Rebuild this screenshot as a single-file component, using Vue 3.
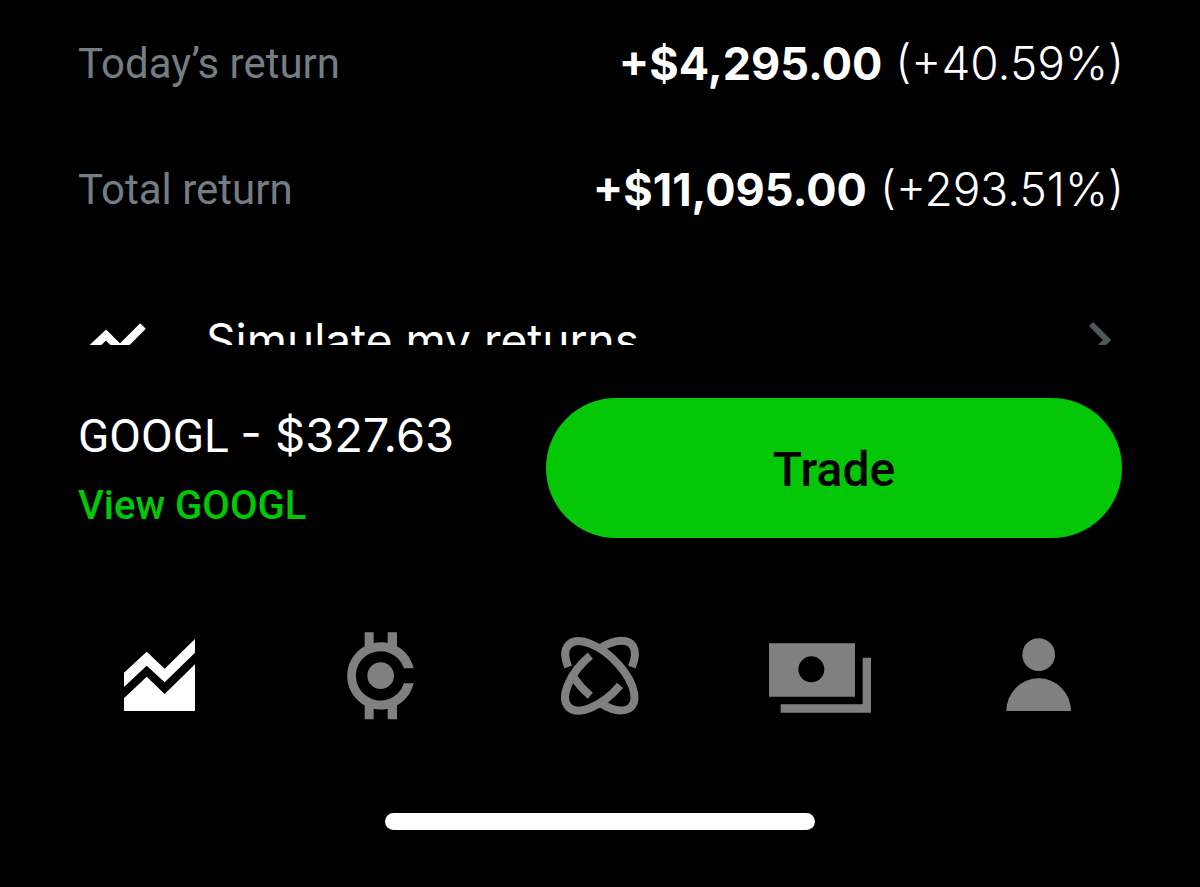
<script setup>
const returns = [
  { label: 'Today’s return', amount: '+$4,295.00', percent: '(+40.59%)' },
  { label: 'Total return', amount: '+$11,095.00', percent: '(+293.51%)' },
]
</script>

<template>
  <div class="screen">
    <main class="details">
      <dl class="returns">
        <div v-for="row in returns" :key="row.label" class="row">
          <dt>{{ row.label }}</dt>
          <dd><strong>{{ row.amount }}</strong> {{ row.percent }}</dd>
        </div>
      </dl>
      <a class="simulate" href="#simulate">
        <svg class="trend" viewBox="0 0 72 48" aria-hidden="true">
          <path d="M7 39 28 19 42 33 65 10" />
        </svg>
        <span class="simulate-label">Simulate my returns</span>
        <svg class="chevron" viewBox="0 0 24 48" aria-hidden="true">
          <path d="M4 8 20 24 4 40" />
        </svg>
      </a>
    </main>

    <footer class="dock">
      <section class="trade-bar">
        <div class="quote">
          <p class="price">GOOGL <span class="figure">- $327.63</span></p>
          <a class="view" href="#googl">View GOOGL</a>
        </div>
        <button class="trade" type="button">Trade</button>
      </section>

      <nav class="tabs" aria-label="Main">
        <a href="#investing" class="tab active" aria-label="Investing" aria-current="page">
          <svg viewBox="0 0 330 330">
            <path d="M57 158 125 95 179 146 270 57V98L179 187 125 137 57 201Z" />
            <path d="M57 235 125 170 179 222 270 133V273H57Z" />
          </svg>
        </a>
        <a href="#crypto" class="tab" aria-label="Crypto">
          <svg viewBox="0 0 330 330">
            <path d="M266 145A101 101 0 1 0 266 190H237A74 74 0 1 1 237 145Z" />
            <path d="M119 37H146V84H119ZM188 37H216V84H188ZM119 251H146V298H119ZM188 251H216V298H188Z" />
            <circle cx="167" cy="167" r="40" />
          </svg>
        </a>
        <a href="#discover" class="tab" aria-label="Discover">
          <svg viewBox="0 0 330 330">
            <g class="orbit" transform="translate(165 167) rotate(45)">
              <path d="M-86 49A132 64 0 1 1 58 58" />
              <path d="M-58 58A132 64 0 0 0 22 63" />
            </g>
            <g class="orbit" transform="translate(165 167) rotate(-45)">
              <path d="M22 -63A132 64 0 1 0 22 63" />
              <path d="M58 -58A132 64 0 0 1 86 49" />
            </g>
          </svg>
        </a>
        <a href="#cash" class="tab" aria-label="Cash">
          <svg viewBox="0 0 330 330">
            <path fill-rule="evenodd" d="M12 70H270V230H12ZM100 148A39 39 0 1 0 178 148A39 39 0 1 0 100 148Z" />
            <path d="M293 113H318V278H47V253H293Z" />
          </svg>
        </a>
        <a href="#account" class="tab" aria-label="Account">
          <svg viewBox="0 0 330 330">
            <circle cx="161" cy="104" r="49" />
            <path d="M64 273A97 98 0 0 1 258 273Z" />
          </svg>
        </a>
      </nav>

      <div class="home-indicator"></div>
    </footer>
  </div>
</template>

<style>
body {
  margin: 0;
  background: #000;
}
</style>

<style scoped>
.screen {
  display: flex;
  flex-direction: column;
  height: 100vh;
  background: #000;
  color: #fff;
  font-family: Roboto, "Liberation Sans", sans-serif;
}
.details {
  flex: 1;
  min-height: 0;
  overflow: hidden;
  padding: 0 76px 0 78px;
}
.returns {
  margin: 0;
}
.row {
  display: flex;
  align-items: center;
  justify-content: space-between;
  height: 126px;
}
dt {
  color: #737d84;
  font-size: 42px;
}
dd {
  margin: 0;
  font-family: Inter, "Liberation Sans", sans-serif;
  font-size: 46px;
  font-weight: 300;
}
strong {
  font-size: 45px;
  font-weight: 700;
}
.simulate {
  display: flex;
  align-items: center;
  margin-top: 64px;
  color: #fff;
  text-decoration: none;
}
.simulate svg {
  fill: none;
  flex: none;
  height: 48px;
}
.trend {
  width: 72px;
  margin-right: 56px;
  stroke: #fff;
  stroke-width: 8;
}
.simulate-label {
  flex: 1;
  font-family: Inter, "Liberation Sans", sans-serif;
  font-size: 46px;
  line-height: 48px;
}
.chevron {
  width: 24px;
  margin-right: 13px;
  stroke: #4e575c;
  stroke-width: 6;
}
.dock {
  padding: 53px 78px 57px;
}
.trade-bar {
  display: flex;
  align-items: center;
  justify-content: space-between;
}
.quote {
  padding-top: 4px;
}
.price {
  margin: 0 0 14px;
  font-size: 46px;
  line-height: 56px;
}
.figure {
  font-family: Inter, "Liberation Sans", sans-serif;
  font-size: 47px;
}
.view {
  display: block;
  color: #00c805;
  font-size: 40px;
  font-weight: 500;
  line-height: 56px;
  text-decoration: none;
}
.trade {
  flex: 0 1 576px;
  height: 140px;
  padding: 2px 0 0;
  border: 0;
  border-radius: 70px;
  background: #04c807;
  color: #000;
  font: 500 48px Roboto, "Liberation Sans", sans-serif;
}
.tabs {
  display: grid;
  grid-template-columns: repeat(5, 1fr);
  margin: 82px -28px 83px;
}
.tab {
  display: flex;
  justify-content: center;
  color: #808080;
}
.tab.active {
  color: #fff;
}
.tab svg {
  width: 110px;
  height: 110px;
  fill: currentColor;
}
.tab .orbit {
  fill: none;
  stroke: currentColor;
  stroke-width: 24;
}
.home-indicator {
  width: 430px;
  height: 17px;
  margin: 0 auto;
  border-radius: 9px;
  background: #fff;
}
</style>
